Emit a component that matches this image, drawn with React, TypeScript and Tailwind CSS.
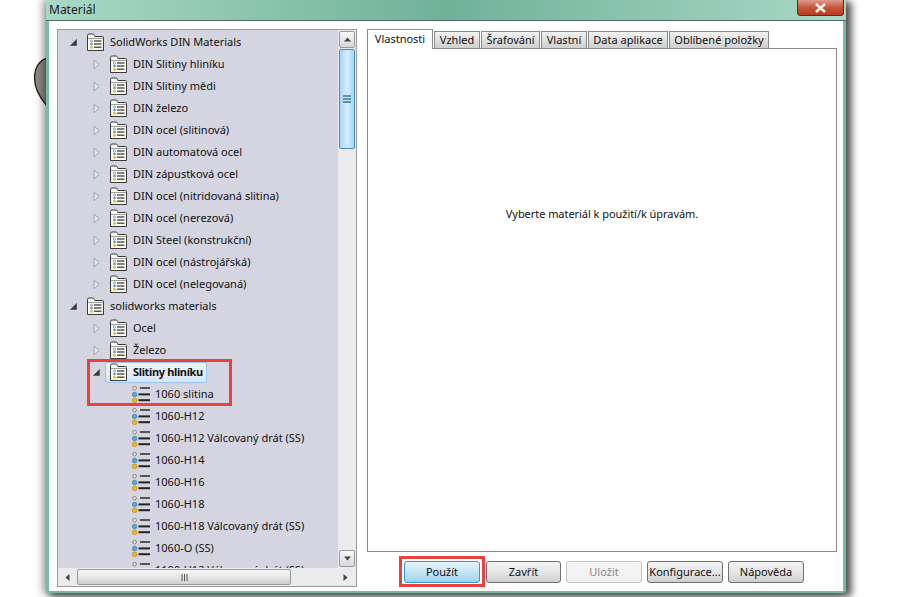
import React from 'react';

const Arrow = ({ open }: { open?: boolean }) =>
  open ? (
    <svg width="9" height="9" viewBox="0 0 9 9" className="shrink-0">
      <path d="M7.5 1.5V7.5H1.5Z" fill="#3c3c3c" stroke="#555" strokeWidth="0.8" />
    </svg>
  ) : (
    <svg width="9" height="11" viewBox="0 0 9 11" className="shrink-0">
      <path d="M2 1.2L7.2 5.5L2 9.8Z" fill="#e8e8ee" stroke="#a2a2a8" strokeWidth="1" />
    </svg>
  );

const FolderIcon = () => (
  <svg width="19" height="19" viewBox="0 0 19 19" className="shrink-0">
    <path
      d="M1.5 17.5V2.5Q1.5 1 3 1H7Q8 1 8.5 2.5L8.8 3.5H16.5Q17.5 3.5 17.5 4.5V17.5Z"
      fill="#fbfbf6"
      stroke="#3a3a3a"
      strokeWidth="1"
    />
    <path d="M2 5.5H17" stroke="#8a8a8a" strokeWidth="0.8" />
    <circle cx="5.5" cy="8" r="1.1" fill="#fff" stroke="#666" strokeWidth="0.6" />
    <circle cx="5.5" cy="11" r="1.3" fill="#4f9fd0" />
    <circle cx="5.5" cy="14.4" r="1.4" fill="#eeb420" />
    <rect x="8" y="7.4" width="7.5" height="1.2" fill="#333" />
    <rect x="8" y="10.4" width="7.5" height="1.2" fill="#333" />
    <rect x="8" y="13.6" width="7.5" height="1.2" fill="#333" />
  </svg>
);

const MaterialIcon = () => (
  <svg width="19" height="17" viewBox="0 0 19 17" className="shrink-0">
    <circle cx="2.6" cy="2.2" r="1.8" fill="#f4f4f4" stroke="#666" strokeWidth="0.8" />
    <circle cx="2.6" cy="8.6" r="2.4" fill="#58a6d6" stroke="#3a6f90" strokeWidth="0.5" />
    <circle cx="2.6" cy="14.4" r="2.4" fill="#f0b818" stroke="#a67e10" strokeWidth="0.5" />
    <rect x="8" y="1" width="10" height="2" fill="#555" />
    <rect x="6.5" y="7.4" width="11.5" height="2" fill="#222" />
    <rect x="6.5" y="13.2" width="11.5" height="2" fill="#222" />
  </svg>
);

const Group = ({ label, level, open }: { label: string; level: 0 | 1; open?: boolean }) => (
  <div className={`flex h-[22px] items-center ${level === 0 ? 'pl-[11px]' : 'pl-[34px]'}`}>
    <div className="w-[17px]">
      <Arrow open={open} />
    </div>
    <FolderIcon />
    <span className="ml-[5px] whitespace-nowrap">{label}</span>
  </div>
);

const din = [
  'DIN Slitiny hliníku',
  'DIN Slitiny mědi',
  'DIN železo',
  'DIN ocel (slitinová)',
  'DIN automatová ocel',
  'DIN zápustková ocel',
  'DIN ocel (nitridovaná slitina)',
  'DIN ocel (nerezová)',
  'DIN Steel (konstrukční)',
  'DIN ocel (nástrojářská)',
  'DIN ocel (nelegovaná)',
];

const alloys = [
  '1060 slitina',
  '1060-H12',
  '1060-H12 Válcovaný drát (SS)',
  '1060-H14',
  '1060-H16',
  '1060-H18',
  '1060-H18 Válcovaný drát (SS)',
  '1060-O (SS)',
  '1100-H12 Válcovaný drát (SS)',
];

const tabs = [
  { label: 'Vzhled', w: 'w-[46px]' },
  { label: 'Šrafování', w: 'w-[59px]' },
  { label: 'Vlastní', w: 'w-[46px]' },
  { label: 'Data aplikace', w: 'w-[80px]' },
  { label: 'Oblíbené položky', w: 'w-[100px]' },
];

const Btn = ({
  children,
  tone = 'border-[#707070] from-[#f4f4f4] via-[#e6e6e6] to-[#cfcfcf]',
  w = 'w-[76px]',
}: {
  children: React.ReactNode;
  tone?: string;
  w?: string;
}) => (
  <button
    className={`flex h-[22px] items-center justify-center rounded-[3px] border bg-gradient-to-b ${tone} ${w}`}
  >
    {children}
  </button>
);

export default function App() {
  return (
    <div className="relative flex h-[597px] w-[900px] overflow-hidden bg-white pl-[46px] text-[11px] text-[#111] [font-family:'Noto_Sans',sans-serif]">
      {/* bit of the model behind the dialog */}
      <svg width="14" height="50" viewBox="0 0 14 50" className="absolute left-[33px] top-[57px]">
        <path d="M14 1C7 3 1.5 10 1.5 21C1.5 32 7 41 14 49Z" fill="#8c8b86" stroke="#1c1c1c" strokeWidth="1.3" />
      </svg>

      <div className="relative flex h-[593px] w-[800px] flex-col rounded-br-[3px] bg-[#79b8a2] px-[3px] pb-[2px] shadow-[-2px_0_8px_1px_rgba(0,0,0,0.4),5px_3px_7px_1px_rgba(0,0,0,0.6)]">
        <div className="-mx-[3px] flex h-[21px] items-center justify-between border-b border-[#4d6b60] bg-gradient-to-r from-[#a9d9c6] via-[#70b19a] to-[#a9d8c7] pl-[3px] pr-[2px]">
          <span className="text-[12px] text-[#1a1a1a]">Materiál</span>
          <div className="mb-[4px] flex h-[17px] w-[47px] items-center justify-center self-end rounded-b-[3px] border border-[#5b2a22] bg-gradient-to-b from-[#dc9c8c] via-[#c6553a] to-[#b83c20]">
            <svg width="13" height="10" viewBox="0 0 13 10">
              <path d="M2 1L11 9M11 1L2 9" stroke="#f4efe8" strokeWidth="2.6" />
            </svg>
          </div>
        </div>

        <div className="flex min-h-0 flex-1 bg-white pl-[8px] pt-[8px] pb-[4px]">
          {/* material tree */}
          <div className="flex h-[558px] w-[300px] flex-col border border-[#9a9a9a] bg-[#d5d5e1]">
            <div className="flex min-h-0 flex-1">
              <div className="min-w-0 flex-1 overflow-hidden pt-px">
                <Group label="SolidWorks DIN Materials" level={0} open />
                {din.map((d) => (
                  <Group key={d} label={d} level={1} />
                ))}
                <Group label="solidworks materials" level={0} open />
                <Group label="Ocel" level={1} />
                <Group label="Železo" level={1} />
                <div className="flex h-[22px] items-center pl-[34px]">
                  <div className="w-[13px]">
                    <Arrow open />
                  </div>
                  <div className="flex h-[21px] items-center rounded-[2px] border border-[#9cc4ec] bg-gradient-to-b from-[#eef5fd] to-[#d5e6f8] pl-[3px] pr-[3px]">
                    <FolderIcon />
                    <span className="ml-[5px] font-bold tracking-[-0.35px]">Slitiny hliníku</span>
                  </div>
                </div>
                {alloys.map((a) => (
                  <div key={a} className="flex h-[22px] items-center pl-[74px]">
                    <MaterialIcon />
                    <span className="ml-[4px] whitespace-nowrap">{a}</span>
                  </div>
                ))}
              </div>
              <div className="flex w-[18px] flex-col items-center bg-[#ececee] pt-px">
                <div className="flex h-[17px] w-[16px] items-center justify-center rounded-[2px] border border-[#9a9a9a] bg-gradient-to-b from-[#f8f8f8] to-[#d8d8d8]">
                  <svg width="7" height="5" viewBox="0 0 7 5"><path d="M3.5 0.5L7 4.5H0Z" fill="#444" /></svg>
                </div>
                <div className="mt-px flex h-[100px] w-[16px] items-center justify-center rounded-[2px] border border-[#4a8ab4] bg-gradient-to-r from-[#a6d6f5] via-[#d2ecfb] to-[#a6d6f5]">
                  <svg width="8" height="8" viewBox="0 0 8 8">
                    <path d="M0 1H8M0 4H8M0 7H8" stroke="#3f7597" strokeWidth="1.4" />
                  </svg>
                </div>
                <div className="flex-1" />
                <div className="mb-px flex h-[17px] w-[16px] items-center justify-center rounded-[2px] border border-[#9a9a9a] bg-gradient-to-b from-[#f8f8f8] to-[#d8d8d8]">
                  <svg width="7" height="5" viewBox="0 0 7 5"><path d="M0 0.5H7L3.5 4.5Z" fill="#444" /></svg>
                </div>
              </div>
            </div>
            <div className="flex h-[18px] items-center bg-[#ececee] pr-[4px]">
              <div className="flex w-[19px] justify-center">
                <svg width="5" height="7" viewBox="0 0 5 7"><path d="M4.5 0V7L0.5 3.5Z" fill="#444" /></svg>
              </div>
              <div className="flex h-[16px] w-[214px] items-center justify-center rounded-[2px] border border-[#9a9a9a] bg-gradient-to-b from-[#f6f6f6] via-[#e6e6e6] to-[#cfcfcf]">
                <svg width="7" height="7" viewBox="0 0 7 7">
                  <path d="M1 0V7M3.5 0V7M6 0V7" stroke="#555" strokeWidth="1" />
                </svg>
              </div>
              <div className="flex flex-1 justify-end pr-[4px]">
                <svg width="5" height="7" viewBox="0 0 5 7"><path d="M0.5 0V7L4.5 3.5Z" fill="#444" /></svg>
              </div>
            </div>
          </div>

          {/* properties side */}
          <div className="ml-[10px] flex h-[558px] w-[470px] flex-col">
            <div className="relative z-10 flex h-[20px] items-end">
              <div className="mr-px flex h-[20px] w-[66px] items-start justify-center border border-b-0 border-[#8c8c8c] bg-white pt-px">
                Vlastnosti
              </div>
              {tabs.map((t) => (
                <div
                  key={t.label}
                  className={`mr-px flex h-[18px] items-center justify-center border border-[#8c8c8c] bg-gradient-to-b from-[#f2f2f2] to-[#cfcfcf] whitespace-nowrap ${t.w}`}
                >
                  {t.label}
                </div>
              ))}
            </div>
            <div className="-mt-px flex h-[504px] items-center justify-center border border-[#8c8c8c] bg-white pb-[172px] tracking-[-0.05px]">
              Vyberte materiál k použití/k úpravám.
            </div>
            <div className="mt-[9px] flex gap-[5px] pl-[37px]">
              <Btn tone="border-[#2f9ad0] from-[#e6f5fd] via-[#c6e5f6] to-[#9fd2ef]">Použít</Btn>
              <Btn w="ml-px w-[75px]">Zavřít</Btn>
              <Btn tone="border-[#c4c4c4] from-[#f5f5f5] via-[#f3f3f3] to-[#f0f0f0] text-[#8a8a8a]">Uložit</Btn>
              <Btn>Konfigurace...</Btn>
              <Btn>Nápověda</Btn>
            </div>
          </div>
        </div>
      </div>

      {/* red callouts */}
      <div className="pointer-events-none absolute left-[87px] top-[359px] h-[47px] w-[145px] border-[3px] border-[#e8423c]" />
      <div className="pointer-events-none absolute left-[399px] top-[556px] h-[31px] w-[86px] border-[3px] border-[#e8423c]" />
    </div>
  );
}
